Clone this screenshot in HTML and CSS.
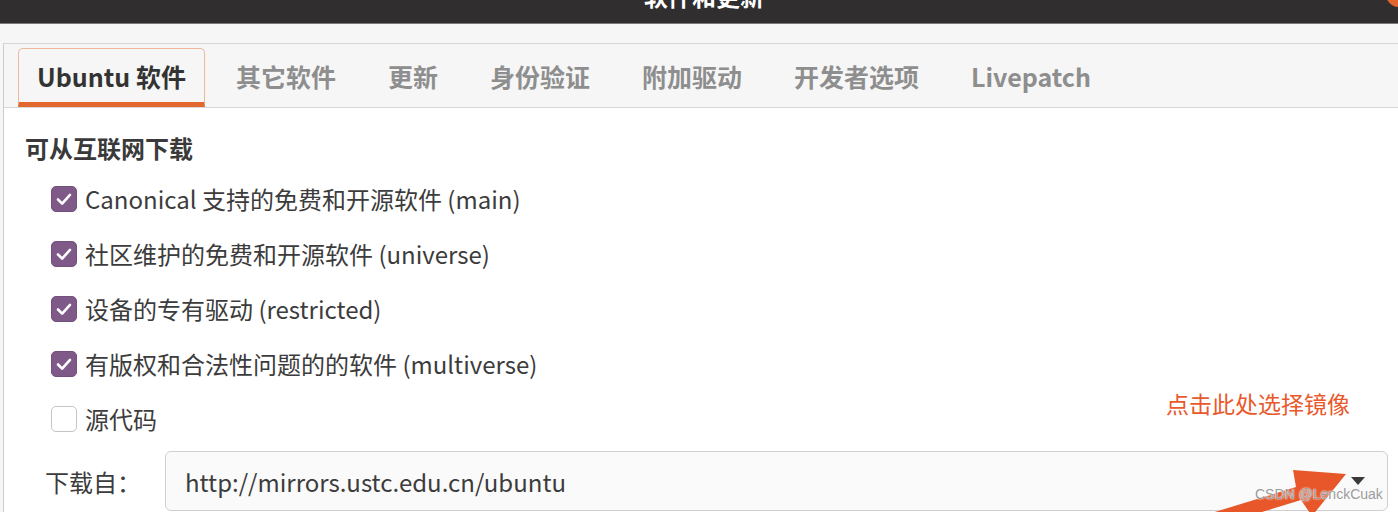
FILE: index.html
```html
<!DOCTYPE html>
<html lang="zh-CN">
<head>
    <meta charset="UTF-8">
    <meta name="viewport" content="width=device-width, initial-scale=1.0">
    <title>软件和更新</title>
    <link rel="stylesheet" href="styles.css">
</head>
<body>

<div class="window">
    <div class="titlebar">
        <span class="title">软件和更新</span>
        <span class="close"></span>
    </div>
    <div class="toolbar"></div>

    <div class="notebook">
        <div class="tabs">
            <div class="tab active">Ubuntu 软件</div>
            <div class="tab">其它软件</div>
            <div class="tab">更新</div>
            <div class="tab">身份验证</div>
            <div class="tab">附加驱动</div>
            <div class="tab">开发者选项</div>
            <div class="tab">Livepatch</div>
        </div>

        <div class="page">
            <div class="heading">可从互联网下载</div>

            <label class="check-row">
                <span class="box checked"><svg viewBox="0 0 26 26"><polyline points="6.5,13.5 11,18 19.5,8.5"/></svg></span>
                <span>Canonical 支持的免费和开源软件 (main)</span>
            </label>
            <label class="check-row">
                <span class="box checked"><svg viewBox="0 0 26 26"><polyline points="6.5,13.5 11,18 19.5,8.5"/></svg></span>
                <span>社区维护的免费和开源软件 (universe)</span>
            </label>
            <label class="check-row">
                <span class="box checked"><svg viewBox="0 0 26 26"><polyline points="6.5,13.5 11,18 19.5,8.5"/></svg></span>
                <span>设备的专有驱动 (restricted)</span>
            </label>
            <label class="check-row">
                <span class="box checked"><svg viewBox="0 0 26 26"><polyline points="6.5,13.5 11,18 19.5,8.5"/></svg></span>
                <span>有版权和合法性问题的的软件 (multiverse)</span>
            </label>
            <label class="check-row">
                <span class="box"></span>
                <span>源代码</span>
            </label>

            <div class="source-row">
                <span class="source-label">下载自：</span>
                <div class="combo">
                    <span>http://mirrors.ustc.edu.cn/ubuntu</span>
                    <span class="caret"></span>
                </div>
            </div>
        </div>
    </div>

    <!-- annotation drawn over the screenshot -->
    <div class="note">点击此处选择镜像</div>
    <svg class="arrow" viewBox="0 0 1398 512">
        <polygon points="1205,515 1296,487 1293,470 1346,474 1312,516 1301,500 1249,516"/>
    </svg>
    <div class="watermark">CSDN @LenckCuak</div>
</div>

</body>
</html>
```

FILE: styles.css
```css
/* Ubuntu "Software & Updates" window */
body {
    margin: 0;
    background: #f6f6f6;
    font-family: "Noto Sans CJK SC", "Noto Sans", sans-serif;
}
.window {
    position: relative;
    width: 1398px;
    height: 512px;
    overflow: hidden;
}
.titlebar {
    height: 23px;
    background: #302e2e;
    border-bottom: 1px solid #7a7a7a;
    display: grid;
    grid-template-columns: 1fr auto 1fr;
    overflow: hidden;
}
.title {
    grid-column: 2;
    color: #ffffff;
    font-size: 24px;
    font-weight: 700;
    line-height: 24px;
    margin-top: -16px;
    margin-left: 10px;
}
.close {
    grid-column: 3;
    justify-self: end;
    width: 26px;
    height: 26px;
    border-radius: 50%;
    background: #e2652e;
    margin-top: -19px;
    margin-right: -14px;
}
.toolbar {
    height: 19px;
}
.notebook {
    margin-left: 3px;
    border-left: 1px solid #cdcdcd;
    border-top: 1px solid #d6d6d6;
}
.tabs {
    display: flex;
    gap: 10px;
    height: 64px;
    box-sizing: border-box;
    padding-left: 14px;
    border-bottom: 1px solid #d8d8d8;
    background: #f6f6f6;
}
.tab {
    display: flex;
    align-items: center;
    margin-top: 4px;
    padding: 0 20px;
    font-size: 25px;
    font-weight: 700;
    color: #8e8e8e;
    border: 1px solid transparent;
    border-bottom-width: 5px;
    border-radius: 5px 5px 0 0;
}
.tab.active {
    padding: 0 18px;
    color: #333333;
    border-color: #f0b79c;
    border-bottom-color: #e2682f;
}
.page {
    background: #ffffff;
    padding: 25px 10px 0 21px;
    height: 404px;
    box-sizing: border-box;
}
.heading {
    font-size: 24px;
    font-weight: 700;
    color: #3a3a3a;
    line-height: 30px;
    margin-bottom: 8px;
}
.check-row {
    display: flex;
    align-items: center;
    gap: 8px;
    height: 55px;
    padding-left: 26px;
    font-size: 24px;
    color: #3c3c3c;
}
.box {
    width: 26px;
    height: 26px;
    box-sizing: border-box;
    border: 1px solid #c4c4c4;
    border-radius: 5px;
    background: #ffffff;
    flex-shrink: 0;
}
.box.checked {
    background: #7f5a88;
    border-color: #74507c;
}
.box svg {
    display: block;
    width: 24px;
    height: 24px;
}
.box polyline {
    fill: none;
    stroke: #ffffff;
    stroke-width: 2.8;
    stroke-linecap: round;
    stroke-linejoin: round;
}
.source-row {
    display: flex;
    align-items: center;
    margin-top: 5px;
    padding-left: 20px;
}
.source-label {
    width: 120px;
    font-size: 24px;
    color: #3c3c3c;
}
.combo {
    flex: 1;
    height: 60px;
    box-sizing: border-box;
    display: flex;
    align-items: center;
    justify-content: space-between;
    padding: 0 22px 0 19px;
    border: 1px solid #cfcfcf;
    border-radius: 6px;
    background: #fafafa;
    font-size: 24px;
    color: #3c3c3c;
}
.caret {
    width: 0;
    height: 0;
    border-left: 7px solid transparent;
    border-right: 7px solid transparent;
    border-top: 8px solid #3a3a3a;
}
.note {
    position: absolute;
    left: 1166px;
    top: 388px;
    font-size: 23px;
    line-height: 30px;
    color: #e8592b;
}
.arrow {
    position: absolute;
    left: 0;
    top: 0;
    width: 1398px;
    height: 512px;
    pointer-events: none;
}
.arrow polygon {
    fill: #e8572a;
}
.watermark {
    position: absolute;
    left: 1255px;
    top: 486px;
    font-family: "Liberation Sans", Arial, sans-serif;
    font-size: 14px;
    color: #9a9a9a;
    text-shadow: 0 0 2px #ffffff, 0 0 1px #ffffff;
}
```
